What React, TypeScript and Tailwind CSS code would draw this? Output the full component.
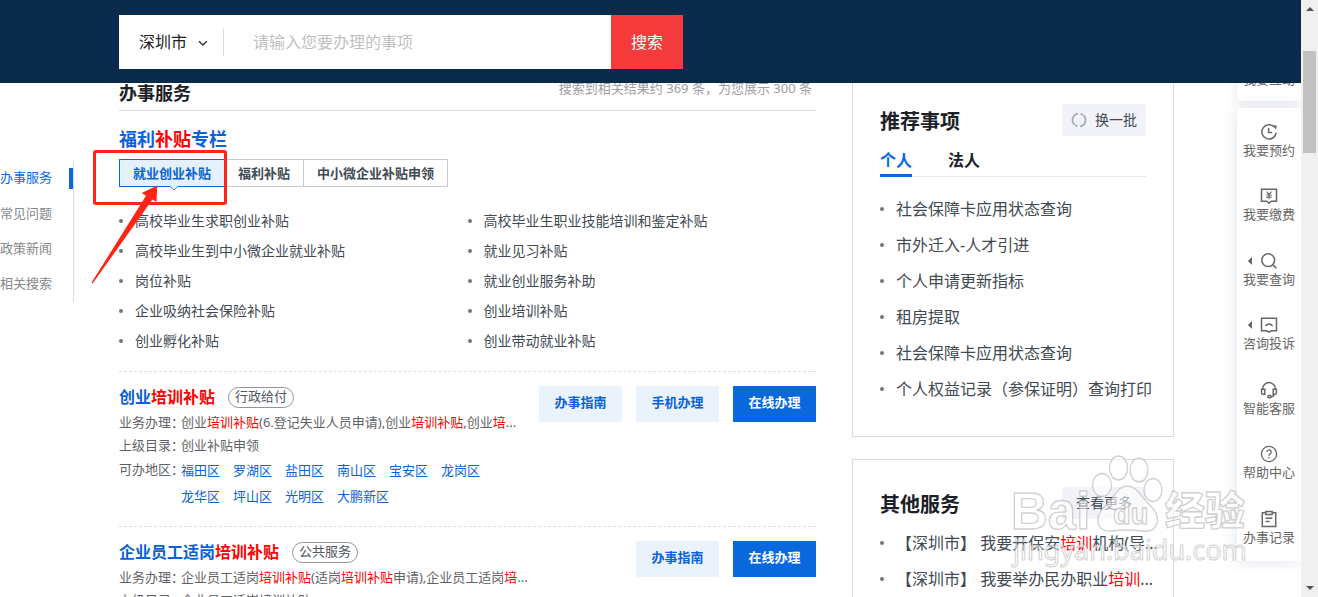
import React from "react";

const navItems = ["办事服务", "常见问题", "政策新闻", "相关搜索"];

const subsidyTabs = ["就业创业补贴", "福利补贴", "中小微企业补贴申领"];

const leftLinks = ["高校毕业生求职创业补贴", "高校毕业生到中小微企业就业补贴", "岗位补贴", "企业吸纳社会保险补贴", "创业孵化补贴"];
const rightLinks = ["高校毕业生职业技能培训和鉴定补贴", "就业见习补贴", "就业创业服务补助", "创业培训补贴", "创业带动就业补贴"];

const recommended = [
  "社会保障卡应用状态查询",
  "市外迁入-人才引进",
  "个人申请更新指标",
  "租房提取",
  "社会保障卡应用状态查询",
  "个人权益记录（参保证明）查询打印",
];

const regions = ["福田区", "罗湖区", "盐田区", "南山区", "宝安区", "龙岗区", "龙华区", "坪山区", "光明区", "大鹏新区"];

function Hl({ children }: { children: React.ReactNode }) {
  return <em className="not-italic text-[#ff0000]">{children}</em>;
}

function BulletList({ items }: { items: string[] }) {
  return (
    <ul className="flex-1">
      {items.map((t) => (
        <li key={t} className="flex h-[30px] items-center">
          <span className="mr-3 size-1 shrink-0 rounded-full bg-[#70757c]" />
          <a href="#" className="whitespace-nowrap text-sm text-[#414a53]">{t}</a>
        </li>
      ))}
    </ul>
  );
}

function SideBullet({ children }: { children: React.ReactNode }) {
  return (
    <li className="flex h-9 items-center">
      <span className="mr-3 size-1 shrink-0 rounded-full bg-[#70757c]" />
      <a href="#" className="whitespace-nowrap text-base text-[#414a53]">{children}</a>
    </li>
  );
}

function ActionButton({ children, primary = false }: { children: React.ReactNode; primary?: boolean }) {
  return (
    <button
      type="button"
      className={
        primary
          ? "h-9 w-[83px] bg-[#0a68dd] pb-[3px] text-[13px] font-bold text-white"
          : "h-9 w-[83px] bg-[#eaf3fc] pb-[3px] text-[13px] font-bold text-[#0a62d6]"
      }
    >
      {children}
    </button>
  );
}

function Row({ label, children }: { label: string; children: React.ReactNode }) {
  return (
    <div className="flex whitespace-nowrap text-[13px] leading-[23px] text-[#5f6265]">
      <span className="w-[62px] shrink-0">{label}</span>
      <span>{children}</span>
    </div>
  );
}

function ResultItem({
  title,
  tag,
  actions,
  children,
}: {
  title: React.ReactNode;
  tag: string;
  actions: React.ReactNode;
  children: React.ReactNode;
}) {
  return (
    <article className="flex justify-between border-t border-dashed border-[#dedede] pb-[17px] pt-[14px]">
      <div className="w-[400px]">
        <div className="flex h-[22px] items-center gap-[13px]">
          <h3 className="whitespace-nowrap text-base font-bold text-[#0a62d6]">{title}</h3>
          <span className="flex h-[21px] items-center rounded-full border border-[#92969b] px-[6px] text-[13px] text-[#50575f]">
            {tag}
          </span>
        </div>
        <div className="mt-[3px]">{children}</div>
      </div>
      <div className="flex shrink-0 gap-[14px]">{actions}</div>
    </article>
  );
}

const iconProps = {
  width: 18,
  height: 18,
  viewBox: "0 0 18 18",
  fill: "none",
  stroke: "#666666",
  strokeWidth: 1.5,
};

const tools: { label: string; arrow?: boolean; icon: React.ReactNode }[] = [
  {
    label: "我要预约",
    icon: (
      <svg {...iconProps}>
        <path d="M14 3.6A7.2 7.2 0 1 0 16.2 9.8" />
        <path d="M8.6 5v4.6h3.6" />
        <path d="M12.6 2.6h4.2l-.8 4z" fill="#666666" stroke="none" />
      </svg>
    ),
  },
  {
    label: "我要缴费",
    icon: (
      <svg {...iconProps}>
        <path d="M1.5 2.2h15v12h-5.3L9 16.2l-2.2-2H1.5z" />
        <path d="M6.5 4.6 9 7.4l2.5-2.8M9 7.4v4.8M6.3 8h5.4M6.3 10.1h5.4" strokeWidth={1.1} />
      </svg>
    ),
  },
  {
    label: "我要查询",
    arrow: true,
    icon: (
      <svg {...iconProps}>
        <circle cx="8.2" cy="8.2" r="6.4" />
        <path d="M12.8 12.8 16.4 16.4" />
      </svg>
    ),
  },
  {
    label: "咨询投诉",
    arrow: true,
    icon: (
      <svg {...iconProps}>
        <path d="M1.5 2.2h15v12.6h-5.3L9 16.2l-2.2-1.4H1.5z" />
        <path d="M5.4 10Q9 6 12.6 10" />
      </svg>
    ),
  },
  {
    label: "智能客服",
    icon: (
      <svg {...iconProps}>
        <path d="M2.6 8.4V8a6.4 6.4 0 0 1 12.800 0v.4" />
        <path d="M1.600 8.200h3.200v5H2.900a1.300 1.300 0 0 1-1.300-1.300zM16.400 8.200h-3.200v5h1.900a1.300 1.300 0 0 0 1.300-1.300z" />
        <path d="M14.200 13.400q-.4 2.200-3 2.400" />
        <rect x="7.800" y="14.600" width="3.400" height="2.200" rx="1" />
      </svg>
    ),
  },
  {
    label: "帮助中心",
    icon: (
      <svg {...iconProps} strokeWidth={1.3}>
        <circle cx="9" cy="9" r="7.6" />
        <path d="M6.8 7.1a2.2 2.2 0 1 1 3.400 1.800Q9 9.600 9 10.700M9 12v1.400" />
      </svg>
    ),
  },
  {
    label: "办事记录",
    icon: (
      <svg {...iconProps}>
        <path d="M5.600 2.800H2.300v13.600h13.400V2.800h-3.300" />
        <path d="M5.800 1.400h6.400v3H5.800zM5.600 8.200h6.800M5.600 11.400h4" />
      </svg>
    ),
  },
];

function Watermark() {
  return (
    <svg
      className="pointer-events-none absolute left-[1005px] top-[450px] z-20"
      width="250"
      height="125"
      viewBox="0 0 250 125"
      fill="#ffffff"
      fillOpacity="0.55"
      stroke="#bcbcbc"
      strokeOpacity="0.7"
      strokeWidth="1.3"
      strokeLinejoin="round"
      aria-hidden="true"
    >
      <ellipse cx="97" cy="35" rx="9.500" ry="11.500" />
      <ellipse cx="113.500" cy="18" rx="9" ry="12" />
      <ellipse cx="134" cy="20" rx="9" ry="12" />
      <ellipse cx="148" cy="40" rx="9" ry="11.500" />
      <path d="M122 36c9 0 13 9 20 16 8 8 12 14 10 21-2 7-8 9-15 8-6-1-10-1-15-1s-9 0-15 1c-7 1-13-2-14-9-1-8 4-13 11-20 7-7 9-16 18-16z" />
      <text x="6" y="79" fontSize="51" fontWeight="700" fontFamily="Liberation Sans, sans-serif">Bai</text>
      <text x="108" y="74" fontSize="29" fontWeight="700" fontFamily="Liberation Sans, sans-serif">du</text>
      <text x="160" y="75" fontSize="40" fontWeight="900" fontFamily="Noto Sans CJK SC, sans-serif">经验</text>
      <text x="8" y="110" fontSize="27" fontFamily="Noto Sans, sans-serif" strokeWidth="1">jingyan.baidu.com</text>
    </svg>
  );
}

export default function App() {
  return (
    <div className="relative flex h-screen overflow-hidden bg-white font-['Noto_Sans','Noto_Sans_CJK_SC',sans-serif]">
      <div className="flex min-w-0 flex-1 flex-col">
        <header className="shrink-0 bg-[#0a2a4b] pb-[14px] pl-[119px] pt-[15px]">
          <form className="flex h-[54px] w-[564px] items-center bg-white" onSubmit={(e) => e.preventDefault()}>
            <div className="relative flex h-7 w-[105px] items-center border-r border-[#dcdcdc]">
              <select aria-label="城市" className="w-full appearance-none bg-transparent pl-5 text-base text-[#222]">
                <option>深圳市</option>
              </select>
              <svg className="pointer-events-none absolute left-[79px] top-[12px]" width="10" height="7" viewBox="0 0 10 7" fill="none" stroke="#333" strokeWidth="1.4">
                <path d="M1 1.2 4.900 5 8.800 1.200" />
              </svg>
            </div>
            <input
              aria-label="搜索事项"
              placeholder="请输入您要办理的事项"
              className="h-full min-w-0 flex-1 pl-[29px] text-base outline-none placeholder:text-[#bfbfbf]"
            />
            <button type="submit" className="h-full w-[72px] bg-[#f43a3a] text-base text-white">搜索</button>
          </form>
        </header>

        <div className="flex min-h-0 flex-1 overflow-hidden">
          <nav className="mt-[78px] flex h-[141px] w-[74px] shrink-0 flex-col border-r border-[#dcdcdc]">
            {navItems.map((t, i) => (
              <a
                key={t}
                href="#"
                className={
                  i === 0
                    ? "flex h-[35px] justify-between text-[13px] leading-8 text-[#0a68dd]"
                    : "h-[35px] text-[13px] leading-[34px] text-[#85888b]"
                }
              >
                {t}
                {i === 0 && <span className="mt-[7px] h-[21px] w-1 bg-[#0a68dd]" />}
              </a>
            ))}
          </nav>

          <main className="-mt-3 ml-[45px] min-w-0 flex-1">
            <div className="flex h-10 items-start justify-between border-b border-[#dcdcdc]">
              <h1 className="text-lg font-bold leading-[45px] text-[#1b2127]">办事服务</h1>
              <p className="pr-1 text-[13px] leading-[34px] text-[#9da0a3]">搜索到相关结果约 369 条，为您展示 300 条</p>
            </div>

            <h2 className="mt-[14px] text-lg font-bold leading-7 text-[#0a62d6]">
              福利<Hl>补贴</Hl>专栏
            </h2>
            <div className="mt-[6px] flex">
              {subsidyTabs.map((t, i) => (
                <button
                  key={t}
                  type="button"
                  className={
                    i === 0
                      ? "relative h-7 border border-[#0a68dd] bg-[#e4f1fd] px-[13px] pt-px text-[13px] font-bold text-[#0a62d6]"
                      : "h-7 border border-l-0 border-[#c8cacc] px-[13px] pt-px text-[13px] font-bold text-[#414a53]"
                  }
                >
                  {t}
                  {i === 0 && (
                    <svg className="absolute left-[49px] top-[25px]" width="10" height="6" viewBox="0 0 10 6" fill="#e4f1fd" stroke="#3d87e3">
                      <path d="M.5 1 5 5 9.500 1" />
                    </svg>
                  )}
                </button>
              ))}
            </div>
            <div className="mb-[15px] mt-[19px] flex">
              <BulletList items={leftLinks} />
              <BulletList items={rightLinks} />
            </div>

            <ResultItem
              title={<>创业<Hl>培训补贴</Hl></>}
              tag="行政给付"
              actions={
                <>
                  <ActionButton>办事指南</ActionButton>
                  <ActionButton>手机办理</ActionButton>
                  <ActionButton primary>在线办理</ActionButton>
                </>
              }
            >
              <Row label="业务办理：">
                创业<Hl>培训补贴</Hl>(6.登记失业人员申请),创业<Hl>培训补贴</Hl>,创业<Hl>培</Hl>...
              </Row>
              <Row label="上级目录：">创业补贴申领</Row>
              <div className="flex text-[13px]">
                <span className="w-[62px] shrink-0 whitespace-nowrap leading-6 text-[#5f6265]">可办地区：</span>
                <div className="flex flex-wrap gap-x-[13px] leading-[26px]">
                  {regions.map((r) => (
                    <a key={r} href="#" className="text-[#0a62d6]">{r}</a>
                  ))}
                </div>
              </div>
            </ResultItem>

            <ResultItem
              title={<>企业员工适岗<Hl>培训补贴</Hl></>}
              tag="公共服务"
              actions={
                <>
                  <ActionButton>办事指南</ActionButton>
                  <ActionButton primary>在线办理</ActionButton>
                </>
              }
            >
              <Row label="业务办理：">
                企业员工适岗<Hl>培训补贴</Hl>(适岗<Hl>培训补贴</Hl>申请),企业员工适岗<Hl>培</Hl>...
              </Row>
              <Row label="上级目录：">企业员工适岗培训补贴</Row>
            </ResultItem>
          </main>

          <aside className="-mt-3 ml-9 w-[322px] shrink-0">
            <section className="border border-[#dcdcdc] px-[27px] pb-[29px] pt-8">
              <div className="flex h-8 items-center justify-between">
                <h2 className="pt-1 text-xl font-bold text-[#1b2127]">推荐事项</h2>
                <button type="button" className="flex h-8 w-[84px] items-center gap-2 bg-[#f2f3f8] pl-[9px] text-sm text-[#414a53]">
                  <svg width="16" height="16" viewBox="0 0 16 16" fill="none" stroke="#a9adb2" strokeWidth="1.8">
                    <path d="M3.400 12.600A6.500 6.500 0 0 1 7 1.600M12.600 3.400A6.500 6.500 0 0 1 9 14.400" />
                    <path d="M9.600 1.800q1.400.3 2.400 1.200M6.400 14.200q-1.400-.3-2.400-1.200" />
                  </svg>
                  换一批
                </button>
              </div>
              <div className="mt-2 flex h-[33px] gap-9 border-b border-[#e8e8e8]">
                <button type="button" className="h-[33px] border-b-[3px] border-[#0a68dd] pt-[2px] text-base font-bold text-[#0a68dd]">个人</button>
                <button type="button" className="h-[33px] border-b-[3px] border-transparent pt-[2px] text-base font-bold text-[#1b2127]">法人</button>
              </div>
              <ul className="mt-[14px]">
                {recommended.map((t, i) => (
                  <SideBullet key={i}>{t}</SideBullet>
                ))}
              </ul>
            </section>

            <section className="mt-[22px] border border-[#dcdcdc] px-[27px] pb-8 pt-[27px]">
              <div className="flex h-8 items-center justify-between">
                <h2 className="pt-1 text-xl font-bold text-[#1b2127]">其他服务</h2>
                <button type="button" className="h-8 w-[84px] bg-[#f2f3f8] text-sm text-[#414a53]">查看更多</button>
              </div>
              <ul className="mt-[6px]">
                <SideBullet>【深圳市】 我要开保安<Hl>培训</Hl>机构(导...</SideBullet>
                <SideBullet>【深圳市】 我要举办民办职业<Hl>培训</Hl>...</SideBullet>
              </ul>
            </section>
          </aside>

          <div className="-mt-3 ml-[63px] w-16 shrink-0 text-center text-[13px] text-[#666]">
            <div className="flex h-[30px] flex-col bg-white shadow-[0_0_12px_rgba(70,95,135,0.16)]">
              <a href="#" className="leading-4">我要互动</a>
            </div>
            <div className="mt-[7px] flex h-[453px] flex-col bg-white pb-[2px] shadow-[0_0_14px_rgba(70,95,135,0.18)]">
              {tools.map((t) => (
                <a key={t.label} href="#" className="relative flex flex-1 flex-col items-center pt-[15px]">
                  {t.arrow && (
                    <svg className="absolute left-[10px] top-5" width="6" height="8" viewBox="0 0 6 8" fill="#666">
                      <path d="M5 0v8L.8 4z" />
                    </svg>
                  )}
                  {t.icon}
                  <span className="leading-[18px]">{t.label}</span>
                </a>
              ))}
            </div>
          </div>
        </div>
      </div>

      <div className="flex w-[17px] shrink-0 flex-col items-center justify-between bg-[#f0f0f0] py-[7px]" aria-hidden="true">
        <svg width="8" height="4" viewBox="0 0 8 4" fill="#505050"><path d="M0 4 4 0l4 4z" /></svg>
        <div className="mb-auto mt-10 h-[102px] w-[13px] bg-[#c1c1c1]" />
        <svg width="8" height="4" viewBox="0 0 8 4" fill="#505050"><path d="M0 0h8L4 4z" /></svg>
      </div>

      <div className="pointer-events-none absolute left-[93px] top-[150px] z-20 h-[55px] w-[134px] rounded-[3px] border-[3px] border-[#ff2414]" />
      <svg className="pointer-events-none absolute left-[90px] top-[184px] z-20" width="70" height="101" viewBox="0 0 70 101" fill="#ff2414" aria-hidden="true">
        <path d="M67.300 1.500 51.700 9 56 11.800 1.600 98.600 2.600 99.500 62.500 15.500 66.500 18z" />
      </svg>
      <Watermark />
    </div>
  );
}
